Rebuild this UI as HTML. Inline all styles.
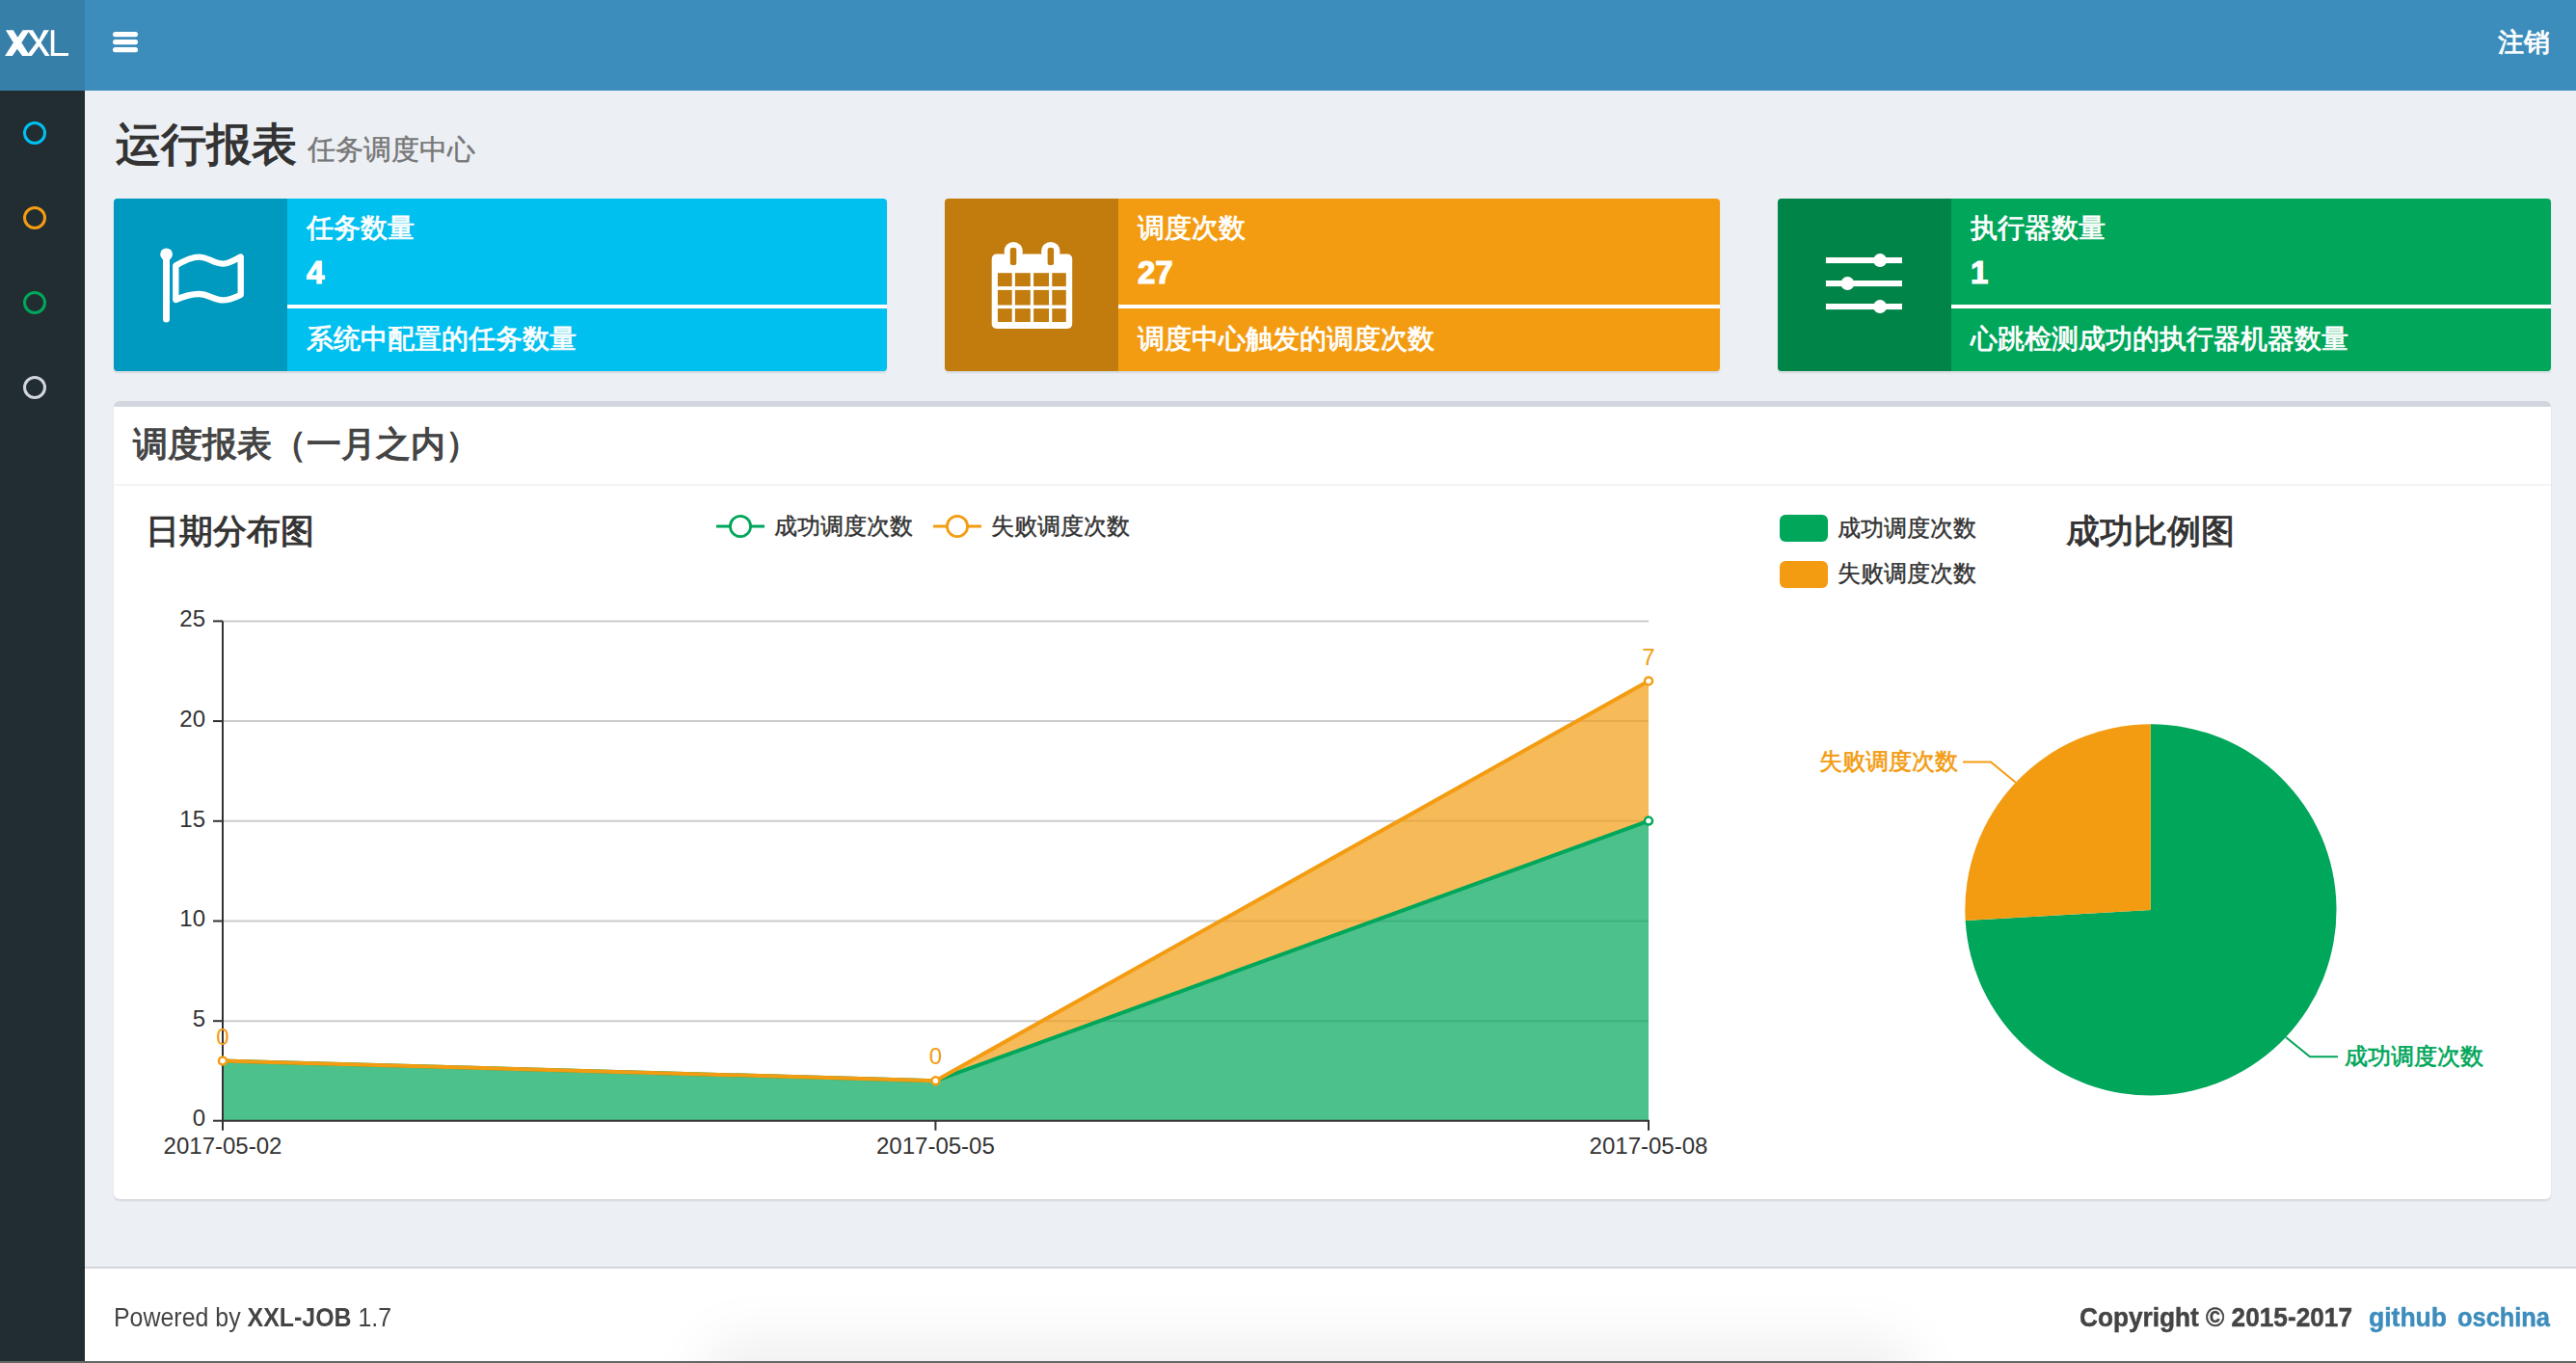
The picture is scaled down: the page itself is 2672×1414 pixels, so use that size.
<!DOCTYPE html>
<html><head><meta charset="utf-8">
<style>
*{margin:0;padding:0;box-sizing:border-box}
html,body{width:2672px;height:1414px;overflow:hidden;background:#ecf0f5;font-family:"Liberation Sans",sans-serif;}
.abs{position:absolute}
.t{position:absolute;white-space:nowrap;line-height:1}
#logo{left:0;top:0;width:88px;height:94px;background:#367fa9}
#nav{left:88px;top:0;width:2584px;height:94px;background:#3c8dbc}
#side{left:0;top:94px;width:88px;height:1320px;background:#222d32}
.ring{position:absolute;left:24px;width:24px;height:24px;border-radius:50%;border:3.5px solid}
.ibox{position:absolute;top:206px;height:179px;border-radius:4px;box-shadow:0 2px 2px rgba(0,0,0,0.1)}
.iicon{position:absolute;left:0;top:0;width:180px;height:179px;background:rgba(0,0,0,0.2);border-radius:4px 0 0 4px}
.ititle{position:absolute;left:200px;color:#fff;font-size:28px;-webkit-text-stroke:0.8px #fff}
.inum{position:absolute;left:200px;color:#fff;font-size:33px;font-weight:bold;-webkit-text-stroke:1.2px #fff}
.iprog{position:absolute;left:180px;right:0;top:110px;height:4px;background:#fff}
#box{left:118px;top:416px;width:2528px;height:828px;background:#fff;border-top:6px solid #d2d6de;border-radius:6px;box-shadow:0 2px 2px rgba(0,0,0,0.1)}
#footer{left:88px;top:1314px;width:2584px;height:100px;background:#fff;border-top:2px solid #d2d6de}
</style></head><body>
<div id="logo" class="abs">
<svg class="abs" style="left:0;top:25px" width="80" height="40" viewBox="0 0 2576 1288">
<polygon fill="#fff" points="190,200 445,200 590,440 760,200 990,200 720,620 1000,1060 745,1060 575,830 415,1060 165,1060 445,620"/>
<polygon fill="#fff" points="905,200 1100,200 1300,520 1460,200 1640,200 1370,620 1665,1060 1510,1060 1300,740 1060,1060 880,1060 1215,620"/>
<polygon fill="#fff" points="1700,200 1815,200 1815,965 2285,965 2285,1060 1700,1060"/>
</svg>
</div>
<div id="nav" class="abs">
<svg class="abs" style="left:28px;top:32px" width="28" height="24" viewBox="0 0 28 24">
<rect x="1" y="1" width="26" height="5.2" rx="2.5" fill="#fff"/>
<rect x="1" y="9" width="26" height="5.2" rx="2.5" fill="#fff"/>
<rect x="1" y="17" width="26" height="5.2" rx="2.5" fill="#fff"/>
</svg>
<div class="t" style="left:2503px;top:31px;font-size:27px;color:#fff;-webkit-text-stroke:0.9px #fff">注销</div>
</div>
<div id="side" class="abs">
<div class="ring" style="top:32px;border-color:#00c0ef"></div>
<div class="ring" style="top:120px;border-color:#f39c12"></div>
<div class="ring" style="top:208px;border-color:#00a65a"></div>
<div class="ring" style="top:296px;border-color:#d2d6de"></div>
</div>

<div class="t" style="left:120px;top:126px;font-size:47px;color:#333;-webkit-text-stroke:1.4px #333">运行报表</div>
<div class="t" style="left:319px;top:141px;font-size:29px;color:#777;-webkit-text-stroke:0.4px #777">任务调度中心</div>

<!-- info boxes -->
<div class="ibox" style="left:118px;width:802px;background:#00c0ef">
 <div class="iicon"></div>
 <svg class="abs" style="left:0;top:0" width="180" height="179" viewBox="118 206 180 179">
  <circle cx="172.6" cy="263.8" r="6.4" fill="#fff"/>
  <line x1="172.5" y1="265" x2="172.5" y2="331" stroke="#fff" stroke-width="7" stroke-linecap="round"/>
  <path fill="none" stroke="#fff" stroke-width="6.4" stroke-linejoin="round" d="M182.3,275.5 C190,271 198,266.6 206.4,266.6 C216,266.6 222,273.6 231.3,273.6 C238,273.6 244,269 249.7,266.5 L249.7,305.8 C244,308.6 238,311.4 231.3,311.4 C222,311.4 216,305 206.4,305 C198,305 190,307.6 182.3,311 Z"/>
 </svg>
 <div class="ititle" style="top:11.5px">任务数量</div>
 <div class="inum" style="top:58px">4</div>
 <div class="iprog"></div>
 <div class="ititle" style="top:126.5px">系统中配置的任务数量</div>
</div>
<div class="ibox" style="left:980px;width:804px;background:#f39c12">
 <div class="iicon"></div>
 <svg class="abs" style="left:0;top:0" width="180" height="179" viewBox="980 206 180 179">
  <rect x="1028.7" y="263.6" width="83.5" height="77.3" rx="5" fill="#fff"/>
  <rect x="1041.6" y="250.9" width="19.2" height="20" rx="9.6" fill="#fff"/>
  <rect x="1080.1" y="250.9" width="19.4" height="20" rx="9.7" fill="#fff"/>
  <g fill="#c27d0e">
   <rect x="1047.8" y="257" width="6.5" height="17.9" rx="2"/>
   <rect x="1086.6" y="257" width="6.5" height="17.9" rx="2"/>
   <rect x="1034.9" y="283.2" width="14.8" height="13.9"/><rect x="1052.9" y="283.2" width="15.9" height="13.9"/><rect x="1072.1" y="283.2" width="15.9" height="13.9"/><rect x="1091.3" y="283.2" width="14.5" height="13.9"/>
   <rect x="1034.9" y="300.9" width="14.8" height="15.6"/><rect x="1052.9" y="300.9" width="15.9" height="15.6"/><rect x="1072.1" y="300.9" width="15.9" height="15.6"/><rect x="1091.3" y="300.9" width="14.5" height="15.6"/>
   <rect x="1034.9" y="320.1" width="14.8" height="13.9"/><rect x="1052.9" y="320.1" width="15.9" height="13.9"/><rect x="1072.1" y="320.1" width="15.9" height="13.9"/><rect x="1091.3" y="320.1" width="14.5" height="13.9"/>
  </g>
 </svg>
 <div class="ititle" style="top:11.5px">调度次数</div>
 <div class="inum" style="top:58px">27</div>
 <div class="iprog"></div>
 <div class="ititle" style="top:126.5px">调度中心触发的调度次数</div>
</div>
<div class="ibox" style="left:1844px;width:802px;background:#00a65a">
 <div class="iicon"></div>
 <svg class="abs" style="left:0;top:0" width="180" height="179" viewBox="1844 206 180 179">
  <g fill="#fff">
   <rect x="1893.9" y="267" width="79.1" height="6.1"/>
   <rect x="1893.9" y="291" width="79.1" height="6.1"/>
   <rect x="1893.9" y="315" width="79.1" height="6.1"/>
   <circle cx="1950.1" cy="270.1" r="7"/>
   <circle cx="1916.4" cy="294.1" r="7"/>
   <circle cx="1950.1" cy="318.1" r="7"/>
  </g>
 </svg>
 <div class="ititle" style="top:11.5px">执行器数量</div>
 <div class="inum" style="top:58px">1</div>
 <div class="iprog"></div>
 <div class="ititle" style="top:126.5px">心跳检测成功的执行器机器数量</div>
</div>

<div id="box" class="abs">
 <div class="abs" style="left:0;top:80px;width:100%;height:2px;background:#f4f4f4"></div>
 <div class="t" style="left:20px;top:21px;font-size:36px;color:#444;-webkit-text-stroke:1.2px #444">调度报表（一月之内）</div>
</div>


<svg class="abs" style="left:0;top:0;pointer-events:none" width="2672" height="1414" viewBox="0 0 2672 1414" font-family="Liberation Sans, sans-serif">
 <!-- line chart title & legend -->
 <text x="151" y="562.5" font-size="35" fill="#333" stroke="#333" stroke-width="1">日期分布图</text>
 <g stroke="#00a65a" stroke-width="2.8" fill="#fff">
  <line x1="743" y1="546" x2="793" y2="546"/>
  <circle cx="768" cy="546" r="10.6"/>
 </g>
 <text x="803" y="554" font-size="24" fill="#333" stroke="#333" stroke-width="0.4">成功调度次数</text>
 <g stroke="#f39c12" stroke-width="2.8" fill="#fff">
  <line x1="968" y1="546" x2="1018" y2="546"/>
  <circle cx="993" cy="546" r="10.6"/>
 </g>
 <text x="1028" y="554" font-size="24" fill="#333" stroke="#333" stroke-width="0.4">失败调度次数</text>
 <!-- grid -->
 <g stroke="#ccc" stroke-width="2">
  <line x1="231" y1="644.4" x2="1710" y2="644.4"/>
  <line x1="231" y1="748.1" x2="1710" y2="748.1"/>
  <line x1="231" y1="851.8" x2="1710" y2="851.8"/>
  <line x1="231" y1="955.5" x2="1710" y2="955.5"/>
  <line x1="231" y1="1059.2" x2="1710" y2="1059.2"/>
 </g>
 <!-- areas -->
 <polygon fill="#00a65a" fill-opacity="0.7" points="231,1162.7 231,1100.5 970.4,1121.2 1710,851.6 1710,1162.7"/>
 <polygon fill="#f39c12" fill-opacity="0.7" points="231,1100.5 970.4,1121.2 1710,851.6 1710,706.4 970.4,1121.2 231,1100.5"/>
 <polyline fill="none" stroke="#00a65a" stroke-width="4" stroke-linejoin="round" points="231,1100.5 970.4,1121.2 1710,851.6"/>
 <polyline fill="none" stroke="#f39c12" stroke-width="4" stroke-linejoin="round" points="231,1100.5 970.4,1121.2 1710,706.4"/>
 <!-- axes -->
 <g stroke="#333" stroke-width="2">
  <line x1="231" y1="644.4" x2="231" y2="1163.7"/>
  <line x1="230" y1="1162.7" x2="1711" y2="1162.7"/>
  <line x1="221" y1="644.4" x2="231" y2="644.4"/>
  <line x1="221" y1="748.1" x2="231" y2="748.1"/>
  <line x1="221" y1="851.8" x2="231" y2="851.8"/>
  <line x1="221" y1="955.5" x2="231" y2="955.5"/>
  <line x1="221" y1="1059.2" x2="231" y2="1059.2"/>
  <line x1="221" y1="1162.7" x2="231" y2="1162.7"/>
  <line x1="231" y1="1162.7" x2="231" y2="1172.7"/>
  <line x1="970.4" y1="1162.7" x2="970.4" y2="1172.7"/>
  <line x1="1710" y1="1162.7" x2="1710" y2="1172.7"/>
 </g>
 <g font-size="24" fill="#333" text-anchor="end">
  <text x="213" y="650">25</text>
  <text x="213" y="754">20</text>
  <text x="213" y="858">15</text>
  <text x="213" y="961">10</text>
  <text x="213" y="1065">5</text>
  <text x="213" y="1168">0</text>
 </g>
 <g font-size="24" fill="#333" text-anchor="middle">
  <text x="231" y="1197">2017-05-02</text>
  <text x="970.4" y="1197">2017-05-05</text>
  <text x="1710" y="1197">2017-05-08</text>
 </g>
 <!-- markers -->
 <g fill="#fff" stroke-width="2.5">
  <circle cx="1710" cy="851.6" r="4" stroke="#00a65a"/>
  <circle cx="231" cy="1100.5" r="4" stroke="#f39c12"/>
  <circle cx="970.4" cy="1121.2" r="4" stroke="#f39c12"/>
  <circle cx="1710" cy="706.4" r="4" stroke="#f39c12"/>
 </g>
 <g font-size="24" fill="#f39c12" text-anchor="middle">
  <text x="231" y="1084">0</text>
  <text x="970.4" y="1104">0</text>
  <text x="1710" y="690">7</text>
 </g>
 <!-- pie legend -->
 <rect x="1846" y="534" width="50" height="28" rx="6" fill="#00a65a"/>
 <rect x="1846" y="582" width="50" height="28" rx="6" fill="#f39c12"/>
 <text x="1906" y="556" font-size="24" fill="#333" stroke="#333" stroke-width="0.4">成功调度次数</text>
 <text x="1906" y="603" font-size="24" fill="#333" stroke="#333" stroke-width="0.4">失败调度次数</text>
 <text x="2230.5" y="562.5" font-size="35" fill="#333" stroke="#333" stroke-width="1" text-anchor="middle">成功比例图</text>
 <!-- pie -->
 <path fill="#00a65a" d="M2230.9,943.9 L2230.9,751.3 A192.6,192.6 0 1,1 2038.63,955.10 Z"/>
 <path fill="#f39c12" d="M2230.9,943.9 L2038.63,955.10 A192.6,192.6 0 0,1 2230.9,751.3 Z"/>
 <polyline fill="none" stroke="#f39c12" stroke-width="2" points="2090.8,811.7 2065,790.4 2036,790.4"/>
 <polyline fill="none" stroke="#00a65a" stroke-width="2" points="2371,1076 2396,1096.2 2425,1096.2"/>
 <text x="2031" y="798" font-size="24" fill="#f39c12" stroke="#f39c12" stroke-width="0.6" text-anchor="end">失败调度次数</text>
 <text x="2432" y="1104" font-size="24" fill="#00a65a" stroke="#00a65a" stroke-width="0.6">成功调度次数</text>
</svg>

<div id="footer" class="abs" style="overflow:hidden">
 <div class="abs" style="left:640px;top:72px;width:1260px;height:90px;background:rgba(0,0,0,0.06);border-radius:45px;filter:blur(26px)"></div>
 <div class="t" style="left:30px;top:36.5px;font-size:28px;color:#444;transform:scaleX(0.89);transform-origin:0 0">Powered by <b>XXL-JOB</b> 1.7</div>
 <div class="t" style="left:2069px;top:36.5px;font-size:28px;color:#444;font-weight:bold;-webkit-text-stroke:0.5px #444;transform:scaleX(0.936);transform-origin:0 0">Copyright © 2015-2017</div>
 <div class="t" style="left:2369px;top:36.5px;font-size:28px;color:#3c8dbc;font-weight:bold;-webkit-text-stroke:0.5px #3c8dbc;transform:scaleX(0.947);transform-origin:0 0">github</div>
 <div class="t" style="left:2461px;top:36.5px;font-size:28px;color:#3c8dbc;font-weight:bold;-webkit-text-stroke:0.5px #3c8dbc;transform:scaleX(0.907);transform-origin:0 0">oschina</div>
</div>
</div>
<div class="abs" style="left:0;top:1412px;width:2672px;height:2px;background:#666"></div>
</body></html>
